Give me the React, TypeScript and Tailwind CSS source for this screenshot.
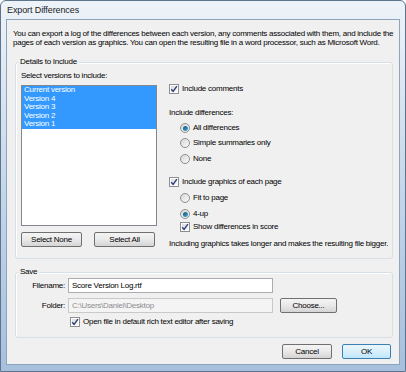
import React from "react";

const font = { fontFamily: '"Liberation Sans", Arial, sans-serif' };

function Check({ checked = true }: { checked?: boolean }) {
  return (
    <span className="relative flex h-[10px] w-[10px] shrink-0 items-center justify-center border border-[#8e8f8f] bg-white">
      <span className="absolute inset-[1px] bg-gradient-to-br from-[#dcdcdc] to-[#f8f8f8]" />
      {checked && (
        <svg viewBox="0 0 8 8" className="relative h-[8px] w-[8px]">
          <path d="M1.2 4.2 L3.1 6.4 L6.9 1.2" fill="none" stroke="#2a3f7a" strokeWidth="1.4" />
        </svg>
      )}
    </span>
  );
}

function Radio({ checked = false }: { checked?: boolean }) {
  return (
    <span className="relative flex h-[10px] w-[10px] shrink-0 items-center justify-center rounded-full border border-[#8e8f8f] bg-gradient-to-br from-[#d6d6d6] to-[#fbfbfb]">
      {checked && (
        <span className="h-[5px] w-[5px] rounded-full bg-gradient-to-br from-[#0d4f73] to-[#46b3e6]" />
      )}
    </span>
  );
}

function Btn({ children, className = "", def = false }: { children: React.ReactNode; className?: string; def?: boolean }) {
  return (
    <div
      className={
        "flex items-center justify-center rounded-[2px] border text-black " +
        (def
          ? "border-[#3c7fb1] bg-gradient-to-b from-[#eaf6fd] via-[#d9f0fc] to-[#bee6fd] "
          : "border-[#707070] bg-gradient-to-b from-[#f4f4f4] via-[#e9e9e9] to-[#d4d4d4] ") +
        className
      }
    >
      {children}
    </div>
  );
}

function Row({ children, className = "" }: { children: React.ReactNode; className?: string }) {
  return <div className={"flex h-[12px] items-center gap-[3px] whitespace-nowrap " + className}>{children}</div>;
}

export default function App() {
  return (
    <div style={font} className="h-[372px] w-[406px] overflow-hidden bg-white">
      <div className="flex h-[372px] w-[406px] flex-col rounded-t-[6px] border border-[#5f748c] bg-gradient-to-b from-[#eef3f9] via-[#c5d7ea] to-[#a6c0dd]">
        <div className="flex h-[18px] shrink-0 items-center pl-[6px] pt-[1px] text-[9px] tracking-[-0.1px] text-[#1b1b1b]">
          Export Differences
        </div>
        <div className="mx-[5px] mb-[6px] flex flex-1 flex-col border border-[#8fa3bb] bg-[#f0f0f0] text-[8px] tracking-[-0.25px] text-black">
          <div className="whitespace-nowrap pl-[6px] pt-[9px] leading-[9px]">
            <div>You can export a log of the differences between each version, any comments associated with them, and include the</div>
            <div>pages of each version as graphics. You can open the resulting file in a word processor, such as Microsoft Word.</div>
          </div>

          {/* Details group */}
          <div className="relative ml-[8px] mr-[6px] mt-[15px] h-[197px] rounded-[3px] border border-[#d5dfe5] shadow-[inset_1px_1px_0_#fff]">
            <span className="absolute -top-[6px] left-[2px] bg-[#f0f0f0] px-[2px] leading-[10px]">Details to Include</span>
            <div className="flex gap-[12px] pl-[5px] pt-[7px]">
              <div className="flex w-[136px] flex-col">
                <div className="h-[11px] leading-[11px]">Select versions to include:</div>
                <div className="mt-[4px] h-[141px] border border-[#828790] bg-white">
                  {["Current version", "Version 4", "Version 3", "Version 2", "Version 1"].map((v) => (
                    <div key={v} className="h-[8.6px] bg-[#3399ff] pl-[2px] leading-[8.6px] text-white">
                      {v}
                    </div>
                  ))}
                </div>
                <div className="mt-[6px] flex gap-[12px]">
                  <Btn className="h-[15px] w-[61px]">Select None</Btn>
                  <Btn className="h-[15px] w-[61px]">Select All</Btn>
                </div>
              </div>
              <div className="flex flex-col pt-[13px]">
                <Row>
                  <Check />
                  <span>Include comments</span>
                </Row>
                <Row className="mt-[12px]">
                  <span>Include differences:</span>
                </Row>
                <Row className="ml-[11px] mt-[3px]">
                  <Radio checked />
                  <span>All differences</span>
                </Row>
                <Row className="ml-[11px] mt-[3px]">
                  <Radio />
                  <span>Simple summaries only</span>
                </Row>
                <Row className="ml-[11px] mt-[4px]">
                  <Radio />
                  <span>None</span>
                </Row>
                <Row className="mt-[11px]">
                  <Check />
                  <span>Include graphics of each page</span>
                </Row>
                <Row className="ml-[11px] mt-[4px]">
                  <Radio />
                  <span>Fit to page</span>
                </Row>
                <Row className="ml-[11px] mt-[4px]">
                  <Radio checked />
                  <span>4-up</span>
                </Row>
                <Row className="ml-[11px] mt-[1px]">
                  <Check />
                  <span>Show differences in score</span>
                </Row>
                <Row className="mt-[5px]">
                  <span>Including graphics takes longer and makes the resulting file bigger.</span>
                </Row>
              </div>
            </div>
          </div>

          {/* Save group */}
          <div className="relative ml-[8px] mr-[6px] mt-[13px] h-[66px] rounded-[3px] border border-[#d5dfe5] shadow-[inset_1px_1px_0_#fff]">
            <span className="absolute -top-[6px] left-[2px] bg-[#f0f0f0] px-[2px] leading-[10px]">Save</span>
            <div className="flex flex-col pt-[5px]">
              <div className="flex h-[15px] items-center">
                <span className="w-[52px] pr-[3px] text-right">Filename:</span>
                <div className="flex h-[15px] w-[205px] items-center border border-[#abadb3] bg-white pl-[3px]">
                  Score Version Log.rtf
                </div>
              </div>
              <div className="mt-[5px] flex h-[15px] items-center">
                <span className="w-[52px] pr-[3px] text-right">Folder:</span>
                <div className="flex h-[15px] w-[205px] items-center border border-[#c9c9c9] bg-[#f4f4f4] pl-[3px] text-[#8d8d8d]">
                  C:\Users\Daniel\Desktop
                </div>
                <Btn className="ml-[7px] h-[15px] w-[57px]">Choose...</Btn>
              </div>
              <div className="ml-[54px] mt-[3px] flex h-[12px] items-center gap-[3px]">
                <Check />
                <span>Open file in default rich text editor after saving</span>
              </div>
            </div>
          </div>

          <div className="mr-[8px] mt-[6px] flex justify-end gap-[10px]">
            <Btn className="h-[15px] w-[50px]">Cancel</Btn>
            <Btn def className="h-[15px] w-[49px]">OK</Btn>
          </div>
        </div>
      </div>
    </div>
  );
}
